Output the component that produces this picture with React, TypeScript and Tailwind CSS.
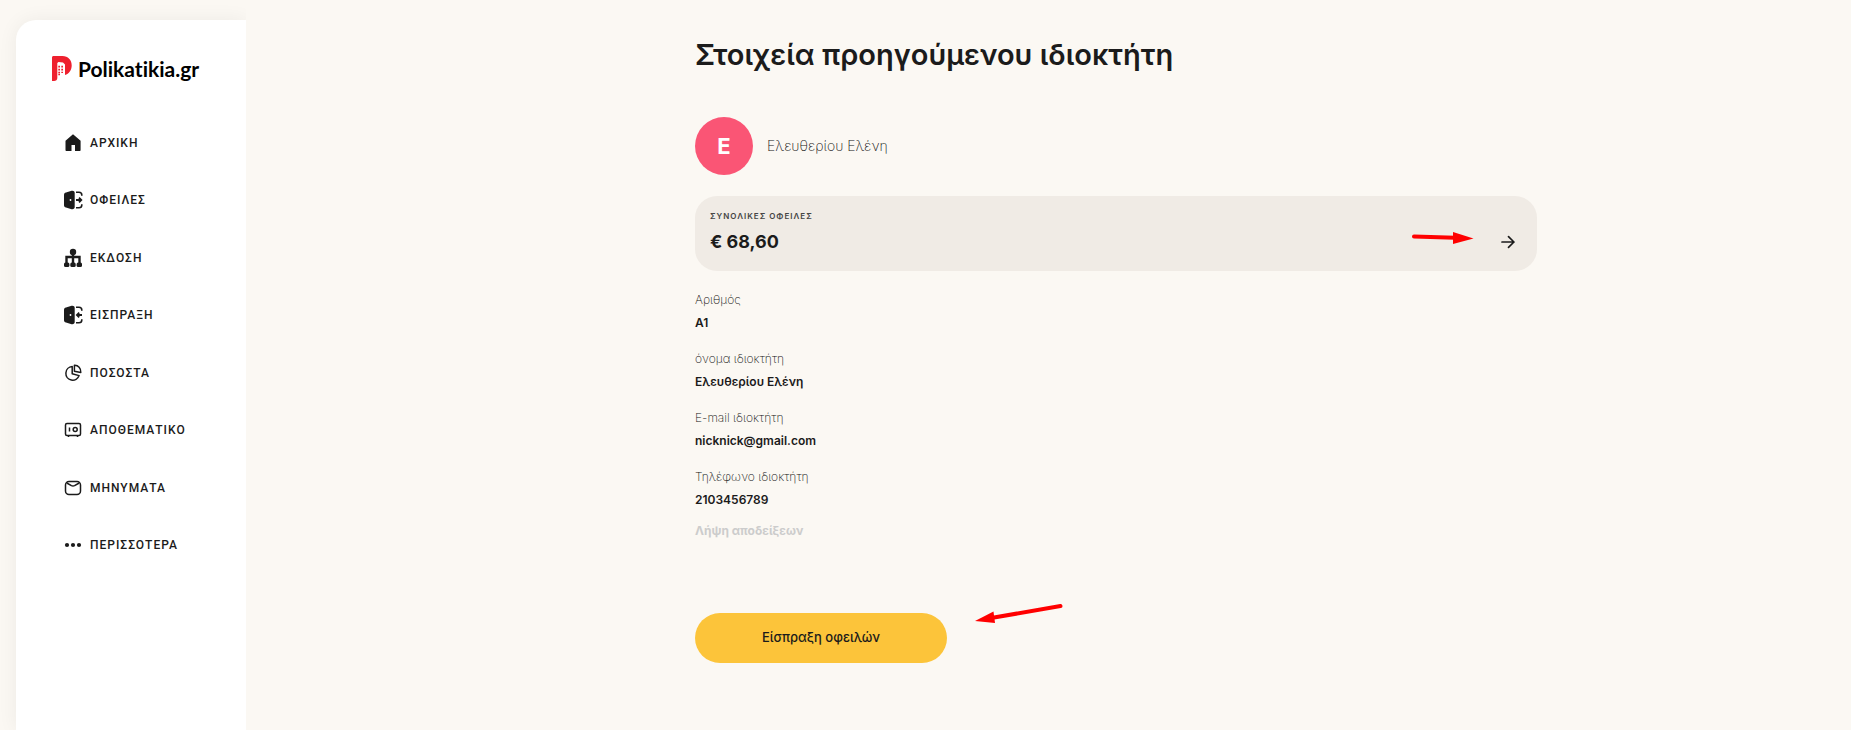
import type { ReactNode } from "react";

interface NavItem {
    label: string;
    icon: ReactNode;
}

interface OwnerField {
    label: string;
    value: string;
}

function Icon({ children }: { children: ReactNode }) {
    return (
        <svg viewBox="0 0 20 20" className="h-5 w-5 shrink-0" fill="none" stroke="currentColor" aria-hidden="true">
            {children}
        </svg>
    );
}

function DoorIcon({ inward = false }: { inward?: boolean }) {
    return (
        <Icon>
            <path
                d="M3 2.4 8.6.8c1.700-.4 3.100.5 3.100 2.100v14.200c0 1.600-1.400 2.500-3.100 2.100L3 17.600C1.700 17.200 1 16.500 1 15.200V4.800C1 3.500 1.700 2.800 3 2.400Z"
                fill="currentColor"
                stroke="none"
            />
            <circle cx="7.500" cy="10" r="0.900" fill="white" stroke="none" />
            <path d="M13 2.200h3c2 0 2.800.8 2.800 2.800v.7M13 17.800h3c2 0 2.800-.8 2.800-2.800v-.7" strokeWidth="1.600" />
            {inward ? (
                <path d="M19 10h-5M16.200 7.700 13.900 10l2.300 2.300" strokeWidth="1.800" />
            ) : (
                <path d="M13 10h5M16 7.700l2.300 2.300-2.300 2.300" strokeWidth="1.800" />
            )}
        </Icon>
    );
}

const navItems: NavItem[] = [
    {
        label: "ΑΡΧΙΚΗ",
        icon: (
            <Icon>
                <path
                    d="M10 1.300 17.600 7.800V17c0 .6-.4 1-1 1H12v-6H8.500v6H3.500c-.6 0-1-.4-1-1V7.800Z"
                    fill="currentColor"
                    stroke="none"
                />
            </Icon>
        ),
    },
    { label: "ΟΦΕΙΛΕΣ", icon: <DoorIcon /> },
    {
        label: "ΕΚΔΟΣΗ",
        icon: (
            <Icon>
                <circle cx="10" cy="4" r="3.200" fill="currentColor" stroke="none" />
                <path d="M10 6v10M3.500 16V9h13v7" strokeWidth="2.400" />
                <g fill="currentColor" stroke="none">
                    <rect x="1" y="14.500" width="5.400" height="4.500" rx="1.500" />
                    <rect x="7.300" y="14.500" width="5.400" height="4.500" rx="1.500" />
                    <rect x="13.600" y="14.500" width="5.400" height="4.500" rx="1.500" />
                </g>
            </Icon>
        ),
    },
    { label: "ΕΙΣΠΡΑΞΗ", icon: <DoorIcon inward /> },
    {
        label: "ΠΟΣΟΣΤΑ",
        icon: (
            <Icon>
                <path d="M9.200 3.600a6.800 6.800 0 1 0 6.900 9L9.200 10.700Z" strokeWidth="1.500" strokeLinejoin="round" />
                <path d="M11.400 2.300c3.800-.2 6.700 2.800 6.400 7.200l-6.400-1.300Z" strokeWidth="1.500" strokeLinejoin="round" />
            </Icon>
        ),
    },
    {
        label: "ΑΠΟΘΕΜΑΤΙΚΟ",
        icon: (
            <Icon>
                <rect x="2.500" y="3.500" width="15" height="12" rx="1.500" strokeWidth="1.500" />
                <circle cx="12.200" cy="9.500" r="2" strokeWidth="1.500" />
                <path d="M6.500 7.500v4M5.500 15.500V17M14.500 15.500V17" strokeWidth="1.500" />
            </Icon>
        ),
    },
    {
        label: "ΜΗΝΥΜΑΤΑ",
        icon: (
            <Icon>
                <rect x="2.500" y="3.500" width="15" height="13" rx="3.500" strokeWidth="1.500" />
                <path d="m3.800 5 4.600 2.700c1.200.6 2 .6 3.200 0L16.200 5" strokeWidth="1.500" />
            </Icon>
        ),
    },
    {
        label: "ΠΕΡΙΣΣΟΤΕΡΑ",
        icon: (
            <Icon>
                <g fill="currentColor" stroke="none">
                    <circle cx="4" cy="10" r="2.100" />
                    <circle cx="10" cy="10" r="2.100" />
                    <circle cx="16" cy="10" r="2.100" />
                </g>
            </Icon>
        ),
    },
];

const ownerFields: OwnerField[] = [
    { label: "Αριθμός", value: "A1" },
    { label: "όνομα ιδιοκτήτη", value: "Ελευθερίου Ελένη" },
    { label: "E-mail ιδιοκτήτη", value: "nicknick@gmail.com" },
    { label: "Τηλέφωνο ιδιοκτήτη", value: "2103456789" },
];

function Logo() {
    return (
        <a href="#" className="flex items-center gap-[6px] pl-9">
            <svg viewBox="0 0 20 25" className="h-[25px] w-5 shrink-0" aria-hidden="true">
                <path
                    d="M1.500 0h9C16 0 19.700 4 19.700 9.200c0 5-2.700 8.600-6.700 9.800V8.500L11 6.500 6.500 6 5.300 7v15C5.300 24 4 25 2 25H0V1.500C0 .6.600 0 1.500 0Z"
                    fill="#ee202e"
                />
                <path
                    d="M6.300 9.800h1.700v1.700H6.300ZM9.300 9.800H11v1.700H9.300ZM6.300 12.800h1.700v1.700H6.300ZM9.300 12.800H11v1.700H9.300ZM6.300 15.800h1.700v1.700H6.300ZM6.300 18h1.700v1.200H6.300ZM9.300 15.800H11v1.200H9.300Z"
                    fill="#ee202e"
                />
            </svg>
            <span className="font-['Lato'] text-[21px] leading-6 font-bold text-black [font-variant-ligatures:none]">Polikatikia.gr</span>
        </a>
    );
}

function Sidebar() {
    return (
        <aside className="flex w-[246px] shrink-0 overflow-hidden pt-5 pl-4">
            <div className="flex-1 rounded-tl-[20px] bg-white pt-9 shadow-[0_0_20px_rgba(0,0,0,0.06)]">
                <Logo />
                <nav className="mt-[33px] grid h-[460px] auto-rows-fr">
                    {navItems.map((item) => (
                        <a key={item.label} href="#" className="flex items-center gap-[7px] pl-[47px] text-[#1b1b1b]">
                            {item.icon}
                            <span className="font-['Roboto'] text-xs font-medium tracking-[1px]">{item.label}</span>
                        </a>
                    ))}
                </nav>
            </div>
        </aside>
    );
}

export default function App() {
    return (
        <div className="flex min-h-screen bg-[#fbf8f3] font-['Inter','Noto_Sans',sans-serif] text-[#1b1b1b]">
            <Sidebar />
            <main className="grid flex-1 grid-cols-[449fr_842fr_314fr] pt-[37px]">
                <div className="col-start-2 min-w-0">
                    <h1 className="text-[29px] leading-9 font-semibold">Στοιχεία προηγούμενου ιδιοκτήτη</h1>

                    <div className="mt-11 flex items-center gap-[14px]">
                        <div className="flex h-[58px] w-[58px] items-center justify-center rounded-full bg-[#fa5575] text-[22px] font-bold text-white">
                            E
                        </div>
                        <p className="text-sm font-extralight text-[#111]">Ελευθερίου Ελένη</p>
                    </div>

                    <section className="mt-[21px] flex h-[75px] items-center rounded-[22px] bg-[#f0ebe5] px-[15px]">
                        <div className="flex-1">
                            <p className="-mt-1 text-[8px] leading-3 font-semibold tracking-[1px] text-[#444]">ΣΥΝΟΛΙΚΕΣ ΟΦΕΙΛΕΣ</p>
                            <p className="mt-2 text-lg leading-6 font-bold">€ 68,60</p>
                        </div>
                        <svg viewBox="0 0 62 14" className="mt-2 mr-5 h-[14px] w-[62px]" aria-hidden="true">
                            <path d="M2 5.500 43 6.800" stroke="#f00" strokeWidth="4" strokeLinecap="round" />
                            <path d="M41 1 61.500 7.500 41 13Z" fill="#f00" />
                        </svg>
                        <button type="button" aria-label="Συνολικές οφειλές" className="mt-4 p-1">
                            <svg viewBox="0 0 20 20" className="h-5 w-5" fill="none" stroke="currentColor" strokeWidth="1.700" aria-hidden="true">
                                <path d="M4 10h12M10.500 4.700l5.400 5.300-5.400 5.300" strokeLinecap="round" strokeLinejoin="round" />
                            </svg>
                        </button>
                    </section>

                    <dl className="mt-5 grid gap-[17px]">
                        {ownerFields.map((field) => (
                            <div key={field.label}>
                                <dt className="text-xs leading-[18px] font-extralight text-[#111]">{field.label}</dt>
                                <dd className="mt-1 text-xs leading-5 font-semibold">{field.value}</dd>
                            </div>
                        ))}
                    </dl>
                    <button type="button" disabled className="mt-[11px] block text-xs leading-5 font-bold text-[#ccc]">
                        Λήψη αποδείξεων
                    </button>

                    <div className="mt-[72px] flex items-start gap-7">
                        <button type="button" className="h-[50px] w-[252px] rounded-full bg-[#fcc43a] text-[13px] font-medium">
                            Είσπραξη οφειλών
                        </button>
                        <svg viewBox="0 0 88 22" className="-mt-[10px] h-[22px] w-[88px]" aria-hidden="true">
                            <path d="M85.500 3 19 14.500" stroke="#f00" strokeWidth="4" strokeLinecap="round" />
                            <path d="M0 18 18.500 8.500 20 20Z" fill="#f00" />
                        </svg>
                    </div>
                </div>
            </main>
        </div>
    );
}
